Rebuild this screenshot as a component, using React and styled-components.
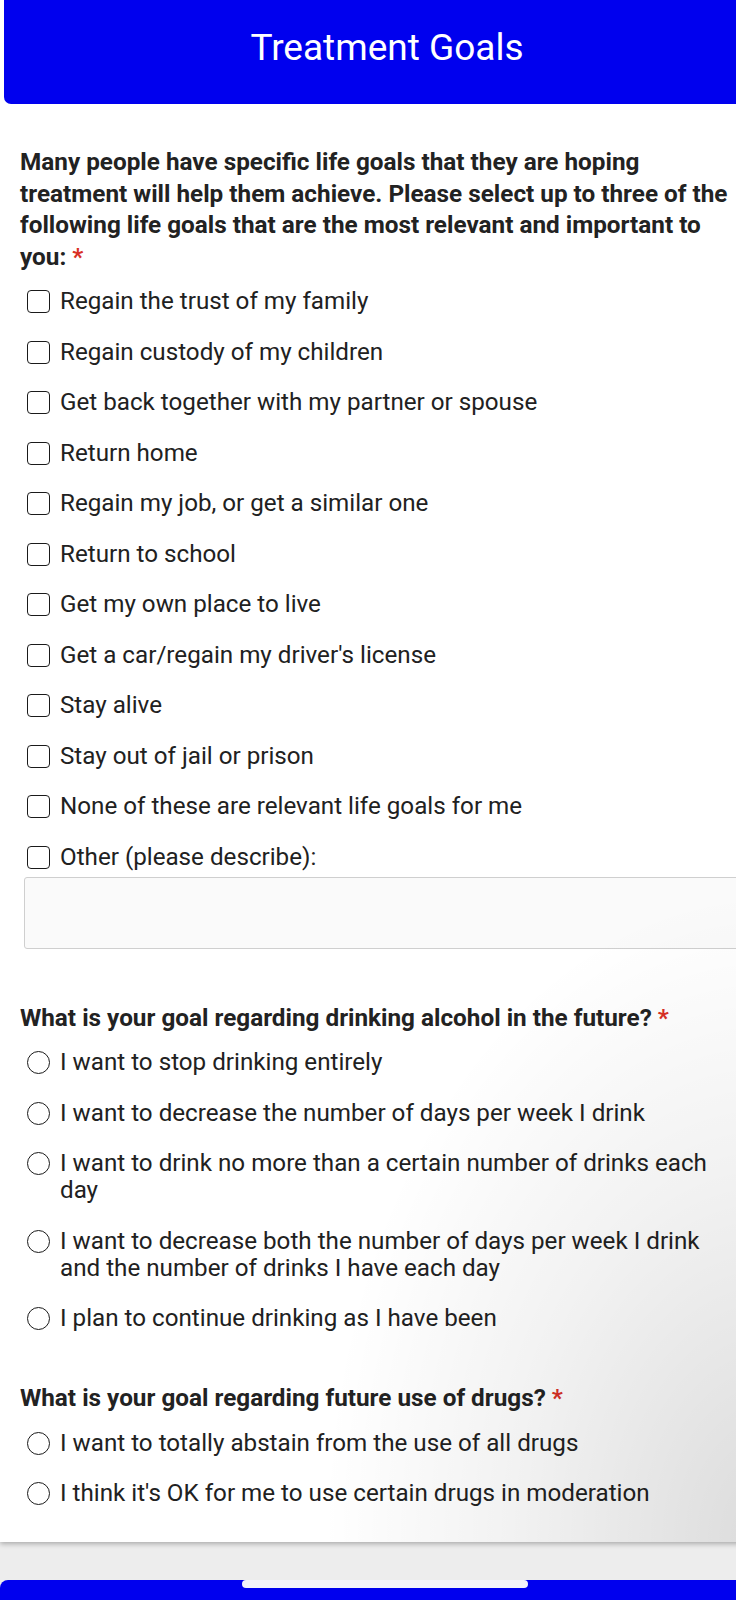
import React from "react";
import styled, { createGlobalStyle } from "styled-components";

const GlobalStyle = createGlobalStyle`
  html, body {
    margin: 0;
    padding: 0;
    overflow: hidden;
    background: #ededed;
    font-family: Roboto, "Noto Sans", "Liberation Sans", sans-serif;
    color: #212121;
  }
  * { box-sizing: border-box; }
`;

const Page = styled.div`
  width: 770px;
  display: flex;
  flex-direction: column;
`;

const Card = styled.section`
  position: relative;
  background: #fff;
  box-shadow: 0 2px 5px rgba(0, 0, 0, 0.28);
  padding-bottom: 35px;
  overflow: hidden;
  &::after {
    content: "";
    position: absolute;
    right: 0;
    bottom: 0;
    width: 440px;
    height: 640px;
    pointer-events: none;
    background: radial-gradient(
      ellipse at 100% 100%,
      rgba(0, 0, 0, 0.14) 0%,
      rgba(0, 0, 0, 0.05) 42%,
      rgba(0, 0, 0, 0) 72%
    );
  }
`;

const Header = styled.header`
  margin-left: 4px;
  height: 104px;
  background: #0000ee;
  border-radius: 0 0 7px 7px;
  display: flex;
  align-items: center;
  justify-content: center;
  color: #fff;
  font-size: 37px;
  font-weight: 400;
  padding-bottom: 10px;
`;

const Body = styled.div`
  padding: 42px 25px 0 20px;
  display: flex;
  flex-direction: column;
`;

const Question = styled.div`
  font-size: 24.3px;
  font-weight: 700;
  line-height: 31.5px;
  color: #222;
  margin-top: ${(p) => p.$top || 0}px;
`;

const Required = styled.span`
  color: #d93025;
`;

const OptionList = styled.div`
  display: flex;
  flex-direction: column;
  gap: 23.5px;
  padding: 0 15px 0 7px;
  margin-top: 16px;
`;

const Option = styled.label`
  display: flex;
  align-items: flex-start;
  gap: 10px;
  font-size: 24.2px;
  line-height: 27px;
  color: #212121;
`;

const Box = styled.span`
  flex: none;
  width: 23px;
  height: 23px;
  margin-top: 2px;
  border: 1.7px solid #1a1a1a;
  border-radius: ${(p) => (p.$round ? "50%" : "4px")};
`;

const TextArea = styled.div`
  margin: 6px 0 0 4px;
  width: calc(100% + 30px);
  height: 72px;
  border: 1.5px solid #cfcfcf;
  border-radius: 3px;
  background: #fafafa;
`;

const Gap = styled.div`
  height: 38px;
`;

const NextBar = styled.div`
  position: relative;
  height: 90px;
  background: #0000ee;
  border-radius: 8px 8px 0 0;
  color: #fff;
  font-size: 24px;
  font-weight: 500;
  letter-spacing: 1px;
  display: flex;
  justify-content: center;
  padding-top: 16px;
`;

const NavHandle = styled.span`
  position: absolute;
  top: 0;
  left: 242px;
  width: 286px;
  height: 8px;
  border-radius: 4px;
  background: #f4f4fb;
`;

const goals = [
  "Regain the trust of my family",
  "Regain custody of my children",
  "Get back together with my partner or spouse",
  "Return home",
  "Regain my job, or get a similar one",
  "Return to school",
  "Get my own place to live",
  "Get a car/regain my driver's license",
  "Stay alive",
  "Stay out of jail or prison",
  "None of these are relevant life goals for me",
  "Other (please describe):",
];

const drinking = [
  "I want to stop drinking entirely",
  "I want to decrease the number of days per week I drink",
  "I want to drink no more than a certain number of drinks each day",
  "I want to decrease both the number of days per week I drink and the number of drinks I have each day",
  "I plan to continue drinking as I have been",
];

const drugs = [
  "I want to totally abstain from the use of all drugs",
  "I think it's OK for me to use certain drugs in moderation",
];

function Options({ items, round }) {
  return (
    <OptionList>
      {items.map((t) => (
        <Option key={t}>
          <Box $round={round} />
          <span>{t}</span>
        </Option>
      ))}
    </OptionList>
  );
}

export default function App() {
  return (
    <>
      <GlobalStyle />
      <Page>
        <Card>
          <Header>Treatment Goals</Header>
          <Body>
            <Question>
              Many people have specific life goals that they are hoping
              treatment will help them achieve. Please select up to three of
              the following life goals that are the most relevant and important
              to you: <Required>*</Required>
            </Question>
            <Options items={goals} />
            <TextArea />
            <Question $top={53}>
              What is your goal regarding drinking alcohol in the future?{" "}
              <Required>*</Required>
            </Question>
            <Options items={drinking} round />
            <Question $top={50}>
              What is your goal regarding future use of drugs?{" "}
              <Required>*</Required>
            </Question>
            <Options items={drugs} round />
          </Body>
        </Card>
        <Gap />
        <NextBar>
          <NavHandle />
          NEXT
        </NextBar>
      </Page>
    </>
  );
}
